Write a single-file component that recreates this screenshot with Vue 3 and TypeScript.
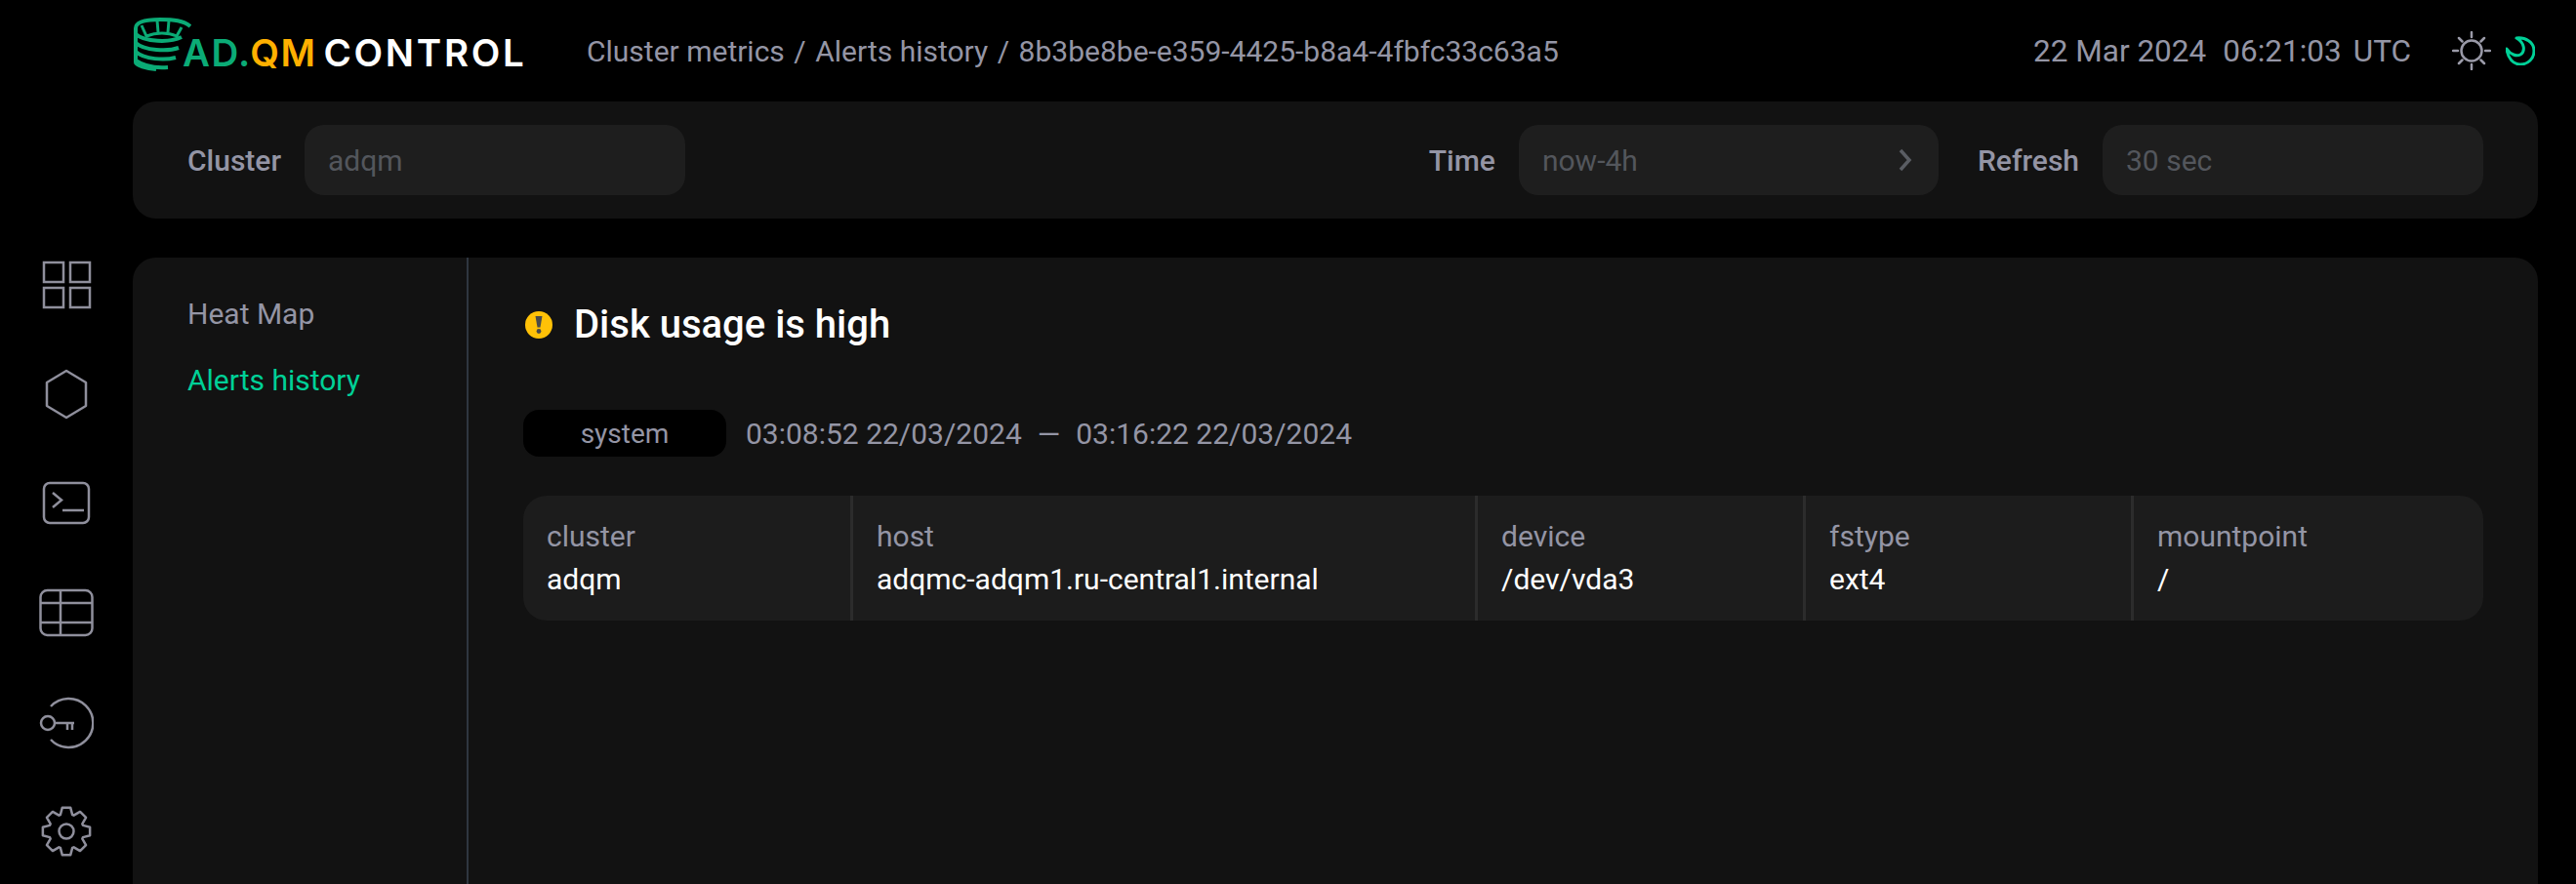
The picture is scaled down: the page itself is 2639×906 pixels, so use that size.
<script setup lang="ts">
const navIcons = ['grid', 'hex', 'terminal', 'table', 'key', 'gear']

const cells = [
  ['cluster', 'adqm'],
  ['host', 'adqmc-adqm1.ru-central1.internal'],
  ['device', '/dev/vda3'],
  ['fstype', 'ext4'],
  ['mountpoint', '/'],
]

// 8 teeth, rounded by stroke-linejoin
function gearPath(): string {
  const pts: string[] = []
  const at = (r: number, deg: number) => {
    const a = ((deg - 90) * Math.PI) / 180
    return `${(28 + r * Math.cos(a)).toFixed(2)} ${(28 + r * Math.sin(a)).toFixed(2)}`
  }
  for (let i = 0; i < 8; i++) {
    const c = i * 45
    pts.push(at(18, c - 20), at(24.5, c - 10), at(24.5, c + 10), at(18, c + 20))
  }
  return `M${pts.join('L')}Z`
}
const gear = gearPath()
</script>

<template>
  <div class="page">
    <header class="top">
      <div class="logo">
        <svg class="logo-icon" viewBox="0 0 60 56" fill="none" stroke="#0bab76" stroke-width="4">
          <path d="M59 9C52 3 42 2 28 2C12 2 3 5 3 11V46C3 49 14 52 24 53" />
          <path d="M3 17C12 25 38 26 50 20" />
          <path d="M3 26C12 34 36 35 47 31" />
          <path d="M3 35C12 43 33 44 44 41" />
          <path d="M3 44C10 49 22 52 36 51" />
          <path d="M9 8L14 19C24 15 36 15 45 19L50 10" stroke-width="3" />
          <path d="M25 3L26 15M37 3L36 15" stroke-width="3" />
        </svg>
        <span class="logo-text"><span class="green">AD.</span><span class="amber">QM</span><span class="white">CONTROL</span></span>
      </div>
      <nav class="crumbs">
        <span>Cluster metrics</span><i>/</i><span>Alerts history</span><i>/</i><span>8b3be8be-e359-4425-b8a4-4fbfc33c63a5</span>
      </nav>
      <div class="clock">
        <span class="date">22 Mar 2024</span><span class="time-now">06:21:03</span><span>UTC</span>
      </div>
      <div class="theme">
        <svg class="sun" viewBox="0 0 40 40" fill="none" stroke="#9a9aa8" stroke-width="2.500" stroke-linecap="round">
          <circle cx="20" cy="20" r="10.500" />
          <path d="M20 1V6M20 34V39M1 20H6M34 20H39M7 7L10.500 10.500M29.500 29.500L33 33M33 7L29.500 10.500M10.500 29.500L7 33" />
        </svg>
        <svg class="moon" viewBox="0 0 30 30" fill="none" stroke="#00d097" stroke-width="3" stroke-linejoin="round">
          <path d="M11 2C20 1 29 6 29 15C29 23 23 29 15 29C8 29 2 23 1 13C5 19 11 21 15 19C20 16 20 7 11 2Z" />
        </svg>
      </div>
    </header>

    <section class="filters">
      <label class="label">Cluster</label>
      <div class="input cluster">adqm</div>
      <div class="spacer"></div>
      <label class="label">Time</label>
      <div class="input time">
        now-4h
        <svg class="chevron" viewBox="0 0 14 24" fill="none" stroke="#5a5d63" stroke-width="3.500">
          <path d="M2 2L11 12L2 22" />
        </svg>
      </div>
      <label class="label refresh">Refresh</label>
      <div class="input cluster">30 sec</div>
    </section>

    <aside class="rail">
      <svg v-for="name in navIcons" :key="name" class="rail-icon" viewBox="0 0 56 56" fill="none" stroke="#8f8f9c" stroke-width="2.500">
        <template v-if="name === 'grid'">
          <rect x="5" y="5" width="20" height="20" />
          <rect x="32" y="5" width="20" height="20" />
          <rect x="5" y="31" width="20" height="20" />
          <rect x="32" y="31" width="20" height="20" />
        </template>
        <path v-else-if="name === 'hex'" d="M28 4L48 16V40L28 52L8 40V16Z" stroke-linejoin="round" />
        <template v-else-if="name === 'terminal'">
          <rect x="5" y="7" width="46" height="41" rx="6" />
          <path d="M14 17L23 24.500L14 32M24 35H46" />
        </template>
        <template v-else-if="name === 'table'">
          <rect x="1.500" y="5" width="53" height="46" rx="7" />
          <path d="M2 18H54M2 38H54M22 5V51" />
        </template>
        <template v-else-if="name === 'key'">
          <circle cx="9" cy="29" r="7" />
          <path d="M16 29H36M29 29V36M34 29V36" />
          <path d="M12 12A25 25 0 1 1 12 46" />
        </template>
        <template v-else>
          <circle cx="28" cy="28" r="7.500" />
          <path :d="gear" stroke-linejoin="round" />
        </template>
      </svg>
    </aside>

    <main class="panel">
      <nav class="side">
        <a>Heat Map</a>
        <a class="active">Alerts history</a>
      </nav>
      <div class="content">
        <h1 class="title">
          <svg class="warn" viewBox="0 0 28 28">
            <circle cx="14" cy="14" r="14" fill="#ffc107" />
            <path d="M10.500 5H17.500L15.500 16.500H12.500Z" fill="#4a4a4a" />
            <circle cx="14" cy="20.500" r="2.400" fill="#4a4a4a" />
          </svg>
          Disk usage is high
        </h1>
        <div class="meta">
          <span class="chip">system</span>
          <span>03:08:52 22/03/2024</span>
          <span class="dash">—</span>
          <span>03:16:22 22/03/2024</span>
        </div>
        <div class="labels">
          <div v-for="[key, value] in cells" :key="key" class="cell">
            <div class="key">{{ key }}</div>
            <div class="value">{{ value }}</div>
          </div>
        </div>
      </div>
    </main>
  </div>
</template>

<style>
html, body {
  margin: 0;
  background: #000;
}
</style>

<style scoped>
.page {
  height: 906px;
  overflow: hidden;
  box-sizing: border-box;
  padding-right: 39px;
  display: grid;
  grid-template-columns: 136px 1fr;
  grid-template-rows: 104px 120px 1fr;
  background: #000;
  font-family: Roboto, sans-serif;
  color: #9495a5;
  font-size: 30px;
}

.top {
  grid-column: 2;
  display: flex;
  align-items: center;
  height: 104px;
}

.logo {
  display: flex;
  align-items: flex-start;
  width: 465px;
  height: 104px;
  flex: none;
}

.logo-icon {
  width: 60px;
  height: 56px;
  margin-top: 18px;
  flex: none;
}

.logo-text {
  margin: 29px 0 0 -9px;
  font-family: Inter, sans-serif;
  font-weight: 600;
  font-size: 38.500px;
  letter-spacing: 1.500px;
  line-height: 50px;
  white-space: nowrap;
}

.green { color: #0bab76; }
.amber { color: #ffb000; }
.white { color: #fff; margin-left: 7px; letter-spacing: 2.700px; }

.crumbs {
  display: flex;
  gap: 9.500px;
  white-space: nowrap;
  flex: 1;
}

.crumbs i {
  font-style: normal;
}

.clock {
  display: flex;
  white-space: nowrap;
  font-size: 31.500px;
}

.date {
  margin-right: 17px;
}

.time-now {
  margin-right: 12px;
}

.theme {
  display: flex;
  align-items: center;
  margin-left: 42px;
  gap: 15px;
  width: 88px;
  flex: none;
}

.sun {
  width: 40px;
  height: 40px;
  flex: none;
}

.moon {
  width: 30px;
  height: 30px;
  flex: none;
}

.filters {
  grid-column: 2;
  display: flex;
  align-items: center;
  padding: 0 56px;
  background: #121212;
  border-radius: 24px;
}

.label {
  font-weight: 500;
  margin-right: 24px;
}

.refresh {
  margin-left: 40px;
}

.input {
  box-sizing: border-box;
  height: 72px;
  width: 390px;
  padding: 0 24px;
  display: flex;
  align-items: center;
  justify-content: space-between;
  background: #1e1e1e;
  border-radius: 20px;
  color: #53565c;
}

.time {
  width: 430px;
  padding-right: 27px;
}

.chevron {
  width: 14px;
  height: 24px;
}

.spacer {
  flex: 1;
}

.rail {
  grid-column: 1;
  grid-row: 3;
  margin-top: 40px;
  display: flex;
  flex-direction: column;
  align-items: center;
  gap: 56px;
}

.rail-icon {
  width: 56px;
  height: 56px;
  flex: none;
}

.panel {
  grid-column: 2;
  grid-row: 3;
  margin-top: 40px;
  display: flex;
  background: #121212;
  border-radius: 24px 24px 0 0;
}

.side {
  box-sizing: border-box;
  width: 344px;
  flex: none;
  padding: 40px 0 0 56px;
  border-right: 2px solid #2f3640;
  display: flex;
  flex-direction: column;
  gap: 32px;
}

.side a {
  line-height: 36px;
}

.side .active {
  color: #00d097;
}

.content {
  flex: 1;
  padding: 0 56px;
}

.title {
  margin: 41px 0 0;
  display: flex;
  align-items: center;
  gap: 22px;
  color: #fff;
  font-size: 40px;
  font-weight: 500;
  line-height: 56px;
}

.warn {
  width: 28px;
  height: 28px;
  margin-left: 2px;
  flex: none;
}

.meta {
  margin-top: 59px;
  display: flex;
  align-items: center;
}

.chip {
  box-sizing: border-box;
  width: 208px;
  height: 48px;
  display: flex;
  align-items: center;
  justify-content: center;
  background: #000;
  border-radius: 16px;
  margin-right: 20px;
  font-size: 28px;
}

.dash {
  margin: 0 16px;
}

.labels {
  margin-top: 40px;
  height: 128px;
  display: grid;
  grid-template-columns: 335px 640px 336px 336px 1fr;
  background: #1c1c1c;
  border-radius: 24px;
  overflow: hidden;
}

.cell {
  box-sizing: border-box;
  padding: 24px 0 0 24px;
  border-left: 3px solid #2c2c2c;
}

.cell:first-child {
  border-left: 0;
}

.key {
  line-height: 36px;
}

.value {
  margin-top: 8px;
  color: #fff;
  line-height: 36px;
}
</style>
